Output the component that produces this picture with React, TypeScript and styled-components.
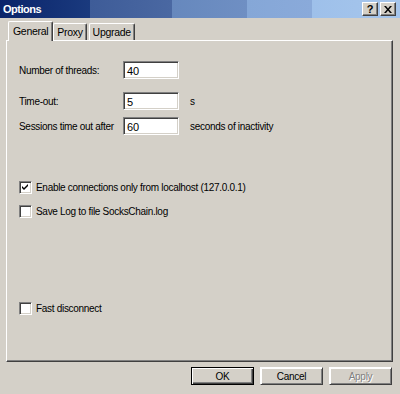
import React from "react";
import styled, { createGlobalStyle } from "styled-components";

const Global = createGlobalStyle`
  html, body { margin: 0; padding: 0; background: #d4d0c8; }
  body {
    font-family: "Liberation Sans", Arial, sans-serif;
    font-size: 10px;
    letter-spacing: -0.3px;
    color: #000;
  }
`;

const Window = styled.div`
  width: 400px;
  height: 394px;
  background: #d4d0c8;
  display: flex;
  flex-direction: column;
  overflow: hidden;
`;

const TitleBar = styled.div`
  height: 18px;
  display: flex;
  align-items: center;
  padding: 0 4px 0 3px;
  background: linear-gradient(
    to right,
    #0a246a 0px, #1a3a7e 90px,
    #3e5c98 90px, #4a68a2 172px,
    #6688bd 172px, #6f8fc3 247px,
    #85a7d7 247px, #8aaada 312px,
    #9ec0ea 312px, #a6c6ec 400px
  );
`;

const Title = styled.span`
  flex: 1;
  color: #fff;
  font-weight: bold;
  font-size: 11px;
  letter-spacing: -0.5px;
`;

const CaptionButton = styled.div`
  width: 16px;
  height: 14px;
  box-sizing: border-box;
  margin-left: 2px;
  background: #d4d0c8;
  border-top: 1px solid #fff;
  border-left: 1px solid #fff;
  border-right: 1px solid #404040;
  border-bottom: 1px solid #404040;
  box-shadow: inset -1px -1px 0 #808080;
  display: flex;
  align-items: center;
  justify-content: center;
  font-weight: bold;
  font-size: 11px;
  line-height: 1;
`;

const Body = styled.div`
  flex: 1;
  display: flex;
  flex-direction: column;
  padding: 3px 7px 0 6px;
`;

const TabStrip = styled.div`
  display: flex;
  align-items: flex-end;
  height: 19px;
  padding-left: 2px;
  position: relative;
  z-index: 1;
`;

const Tab = styled.div<{ $active?: boolean }>`
  box-sizing: border-box;
  height: ${(p) => (p.$active ? "20px" : "17px")};
  margin: ${(p) => (p.$active ? "0 -2px -1px 0" : "0 0 0 2px")};
  padding: ${(p) => (p.$active ? "3px 4px 0 4px" : "2px 3px 0 3px")};
  background: #d4d0c8;
  border-top: 1px solid #fff;
  border-left: 1px solid #fff;
  border-right: 1px solid #404040;
  box-shadow: inset -1px 0 0 #808080;
  border-radius: 2px 2px 0 0;
  font-size: 10.5px;
  white-space: nowrap;
`;

const Panel = styled.div`
  flex: 1;
  box-sizing: border-box;
  border-top: 1px solid #fff;
  border-left: 1px solid #fff;
  border-right: 1px solid #404040;
  border-bottom: 1px solid #404040;
  box-shadow: inset -1px -1px 0 #808080;
  padding: 20px 12px 0 12px;
  display: flex;
  flex-direction: column;
`;

const FieldRow = styled.div<{ $mt: number }>`
  display: flex;
  align-items: center;
  margin-top: ${(p) => p.$mt}px;
  height: 18px;
  white-space: nowrap;
`;

const Label = styled.span`
  width: 104px;
`;

const Input = styled.div`
  width: 56px;
  height: 18px;
  box-sizing: border-box;
  background: #fff;
  border-top: 1px solid #808080;
  border-left: 1px solid #808080;
  border-right: 1px solid #fff;
  border-bottom: 1px solid #fff;
  box-shadow: inset 1px 1px 0 #404040, inset -1px -1px 0 #d4d0c8;
  padding: 3px 0 0 3px;
  font-size: 11px;
  letter-spacing: 0;
`;

const Unit = styled.span`
  margin-left: 11px;
`;

const CheckRow = styled.div<{ $mt: number }>`
  display: flex;
  align-items: center;
  margin-top: ${(p) => p.$mt}px;
  height: 13px;
  white-space: nowrap;
`;

const Box = styled.div`
  width: 13px;
  height: 13px;
  box-sizing: border-box;
  background: #fff;
  border-top: 1px solid #808080;
  border-left: 1px solid #808080;
  border-right: 1px solid #fff;
  border-bottom: 1px solid #fff;
  box-shadow: inset 1px 1px 0 #404040, inset -1px -1px 0 #d4d0c8;
  margin-right: 4px;
  display: flex;
  align-items: center;
  justify-content: center;
`;

const ButtonRow = styled.div`
  display: flex;
  justify-content: flex-end;
  gap: 6px;
  padding: 5px 1px 9px 0;
`;

const Button = styled.div<{ $default?: boolean; $disabled?: boolean }>`
  width: 63px;
  height: 18px;
  box-sizing: border-box;
  display: flex;
  align-items: center;
  justify-content: center;
  color: ${(p) => (p.$disabled ? "#808080" : "#000")};
  text-shadow: ${(p) => (p.$disabled ? "1px 1px 0 #fff" : "none")};
  border: 1px solid ${(p) => (p.$default ? "#000" : "transparent")};
  box-shadow: ${(p) =>
    p.$default
      ? "inset 1px 1px 0 #fff, inset -1px -1px 0 #404040, inset -2px -2px 0 #808080"
      : "inset 1px 1px 0 #fff, inset -1px -1px 0 #808080"};
  ${(p) => (p.$default ? "" : "border-color: #fff #404040 #404040 #fff;")}
`;

const Check = () => (
  <svg width="7" height="7" viewBox="0 0 7 7">
    <path d="M0 2 L2 4 L6 0 L6 2 L2 6 L0 4 Z" fill="#000" />
  </svg>
);

export default function App() {
  return (
    <Window>
      <Global />
      <TitleBar>
        <Title>Options</Title>
        <CaptionButton>?</CaptionButton>
        <CaptionButton>
          <svg width="8" height="7" viewBox="0 0 8 7">
            <path d="M0 0h2l2 2.5L6 0h2L5 3.5 8 7H6L4 4.5 2 7H0l3-3.5z" fill="#000" />
          </svg>
        </CaptionButton>
      </TitleBar>
      <Body>
        <TabStrip>
          <Tab $active>General</Tab>
          <Tab>Proxy</Tab>
          <Tab>Upgrade</Tab>
        </TabStrip>
        <Panel>
          <FieldRow $mt={0}>
            <Label>Number of threads:</Label>
            <Input>40</Input>
          </FieldRow>
          <FieldRow $mt={13}>
            <Label>Time-out:</Label>
            <Input>5</Input>
            <Unit>s</Unit>
          </FieldRow>
          <FieldRow $mt={7}>
            <Label>Sessions time out after</Label>
            <Input>60</Input>
            <Unit>seconds of inactivity</Unit>
          </FieldRow>
          <CheckRow $mt={46}>
            <Box><Check /></Box>
            <span>Enable connections only from localhost (127.0.0.1)</span>
          </CheckRow>
          <CheckRow $mt={11}>
            <Box />
            <span>Save Log to file SocksChain.log</span>
          </CheckRow>
          <CheckRow $mt={84}>
            <Box />
            <span>Fast disconnect</span>
          </CheckRow>
        </Panel>
        <ButtonRow>
          <Button $default>OK</Button>
          <Button>Cancel</Button>
          <Button $disabled>Apply</Button>
        </ButtonRow>
      </Body>
    </Window>
  );
}
